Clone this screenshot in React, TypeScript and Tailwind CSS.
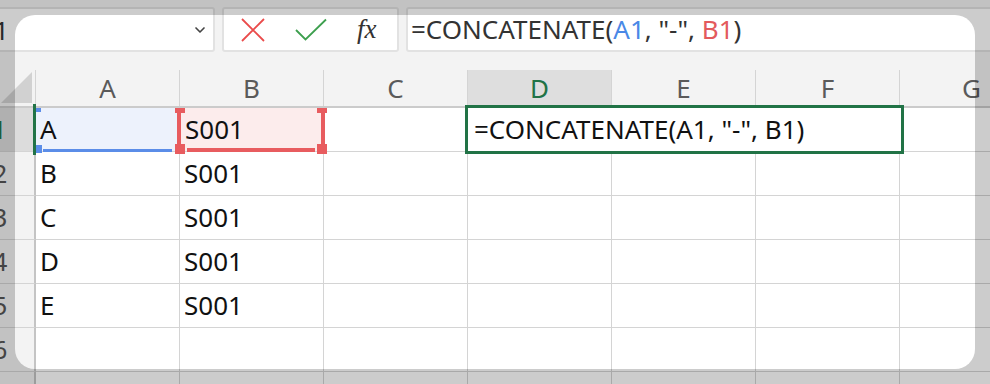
import { ChevronDown } from "lucide-react";

const cols = ["A", "B", "C", "D", "E", "F", "G"];
const rows = [
  ["A", "S001"],
  ["B", "S001"],
  ["C", "S001"],
  ["D", "S001"],
  ["E", "S001"],
  ["", ""],
  ["", ""],
];

function Toolbar() {
  return (
    <div className="flex h-[60px] items-start gap-[7px] pt-[7px]">
      <div className="flex h-[45px] w-[249px] items-center justify-between rounded-[3px] border-2 border-[#e2e2e2] bg-white pl-[7px] pr-[5px]">
        <span className="text-[26px] leading-none text-[#333]">D1</span>
        <ChevronDown className="h-[16px] w-[16px] text-[#444]" strokeWidth={2.5} />
      </div>

      <div className="flex h-[45px] w-[177px] items-center gap-[30px] rounded-[3px] border-2 border-[#e2e2e2] bg-white pl-[17px]">
        <svg width="24" height="24" viewBox="0 0 24 24">
          <path d="M1 1 L23 23 M23 1 L1 23" stroke="#ea4b4b" strokeWidth="1.8" fill="none" />
        </svg>
        <svg width="32" height="24" viewBox="0 0 32 24">
          <path d="M1 12 L10.5 21.5 L31 1.5" stroke="#3d9f4e" strokeWidth="1.8" fill="none" />
        </svg>
        <span className="font-['Liberation_Serif',serif] text-[27px] italic leading-none text-[#333]">fx</span>
      </div>

      <div className="flex h-[45px] flex-1 items-center rounded-[3px] border-2 border-[#e2e2e2] bg-white pl-[3px] text-[26px] text-[#333]">
        =CONCATENATE(<span className="text-[#4a88e6]">A1</span>, "-",&nbsp;<span className="text-[#e35a5d]">B1</span>)
      </div>
    </div>
  );
}

function HeaderRow() {
  return (
    <div className="mt-[10px] flex h-[38px] border-b-2 border-[#cbcbcb]">
      <div className="flex w-[70px] items-end justify-end border-r border-[#d4d4d4] pb-[3px] pr-[3px]">
        <svg width="31" height="31" viewBox="0 0 31 31">
          <polygon points="31,0 31,31 0,31" fill="#d1d1d1" />
        </svg>
      </div>
      {cols.map((c) => (
        <div
          key={c}
          className={
            c === "D"
              ? "flex w-[144px] items-center justify-center border-r border-[#d4d4d4] bg-[#dedede] text-[26px] text-[#217346]"
              : "flex w-[144px] items-center justify-center border-r border-[#d4d4d4] text-[26px] text-[#5a5a5a]"
          }
        >
          {c}
        </div>
      ))}
    </div>
  );
}

function Body() {
  return (
    <div className="relative">
      {rows.map((r, i) => (
        <div key={i} className="flex h-[44px]">
          <div
            className={
              i === 0
                ? "flex w-[70px] items-center justify-center border-b border-r-[3px] border-b-[#d4d4d4] border-r-[#217346] bg-[#dcdcdc] text-[26px] text-[#217346]"
                : "flex w-[70px] items-center justify-center border-b border-r-2 border-b-[#d4d4d4] border-r-[#c4c4c4] bg-[#f3f3f3] text-[26px] text-[#555]"
            }
          >
            {i + 1}
          </div>
          {cols.map((c, j) => (
            <div
              key={c}
              className={
                i === 0 && j === 0
                  ? "flex w-[144px] items-center border-b border-r border-[#d4d4d4] bg-[#edf2fc] pl-[4px] text-[26px] text-[#111]"
                  : i === 0 && j === 1
                    ? "flex w-[144px] items-center border-b border-r border-[#d4d4d4] bg-[#fcecec] pl-[5px] text-[26px] text-[#111]"
                    : "flex w-[144px] items-center border-b border-r border-[#d4d4d4] bg-white pl-[4px] text-[26px] text-[#111]"
              }
            >
              {j === 0 ? r[0] : j === 1 ? r[1] : ""}
            </div>
          ))}
        </div>
      ))}

      {/* row indicator */}
      <div className="absolute left-[67px] top-[-4px] h-[51px] w-[3px] bg-[#217346]" />

      {/* A1 reference range */}
      <div className="absolute left-[70px] top-0 h-[4px] w-[5px] bg-[#5b8de8]" />
      <div className="absolute left-[70px] top-[37px] h-[8px] w-[6px] bg-[#5b8de8]" />
      <div className="absolute left-[77px] top-[41px] h-[3px] w-[129px] bg-[#5b8de8]" />

      {/* B1 reference range */}
      <div className="absolute left-[209px] top-0 h-[5px] w-[10px] bg-[#e85c5f]" />
      <div className="absolute left-[211px] top-[5px] h-[33px] w-[4px] bg-[#e85c5f]" />
      <div className="absolute left-[209px] top-[36px] h-[10px] w-[10px] bg-[#e85c5f]" />
      <div className="absolute left-[221px] top-[40px] h-[4px] w-[128px] bg-[#e85c5f]" />
      <div className="absolute left-[351px] top-0 h-[5px] w-[10px] bg-[#e85c5f]" />
      <div className="absolute left-[355px] top-[5px] h-[33px] w-[4px] bg-[#e85c5f]" />
      <div className="absolute left-[351px] top-[36px] h-[10px] w-[10px] bg-[#e85c5f]" />

      {/* edit box on D1 */}
      <div className="absolute left-[499px] top-[-3px] flex h-[49px] w-[439px] items-center border-[3px] border-[#217346] bg-white pl-[6px] text-[26px] text-[#111]">
        =CONCATENATE(A1, "-", B1)
      </div>
    </div>
  );
}

export default function App() {
  return (
    <div className="relative h-[384px] w-[990px] overflow-hidden bg-[#f3f3f3] font-['Noto_Sans',sans-serif]">
      <div className="-ml-[34px] w-[1120px]">
        <Toolbar />
        <HeaderRow />
        <Body />
      </div>
      <div className="pointer-events-none absolute left-[15px] top-[15px] h-[354px] w-[960px] rounded-[20px] shadow-[0_0_0_1000px_rgba(0,0,0,0.2)]" />
    </div>
  );
}
